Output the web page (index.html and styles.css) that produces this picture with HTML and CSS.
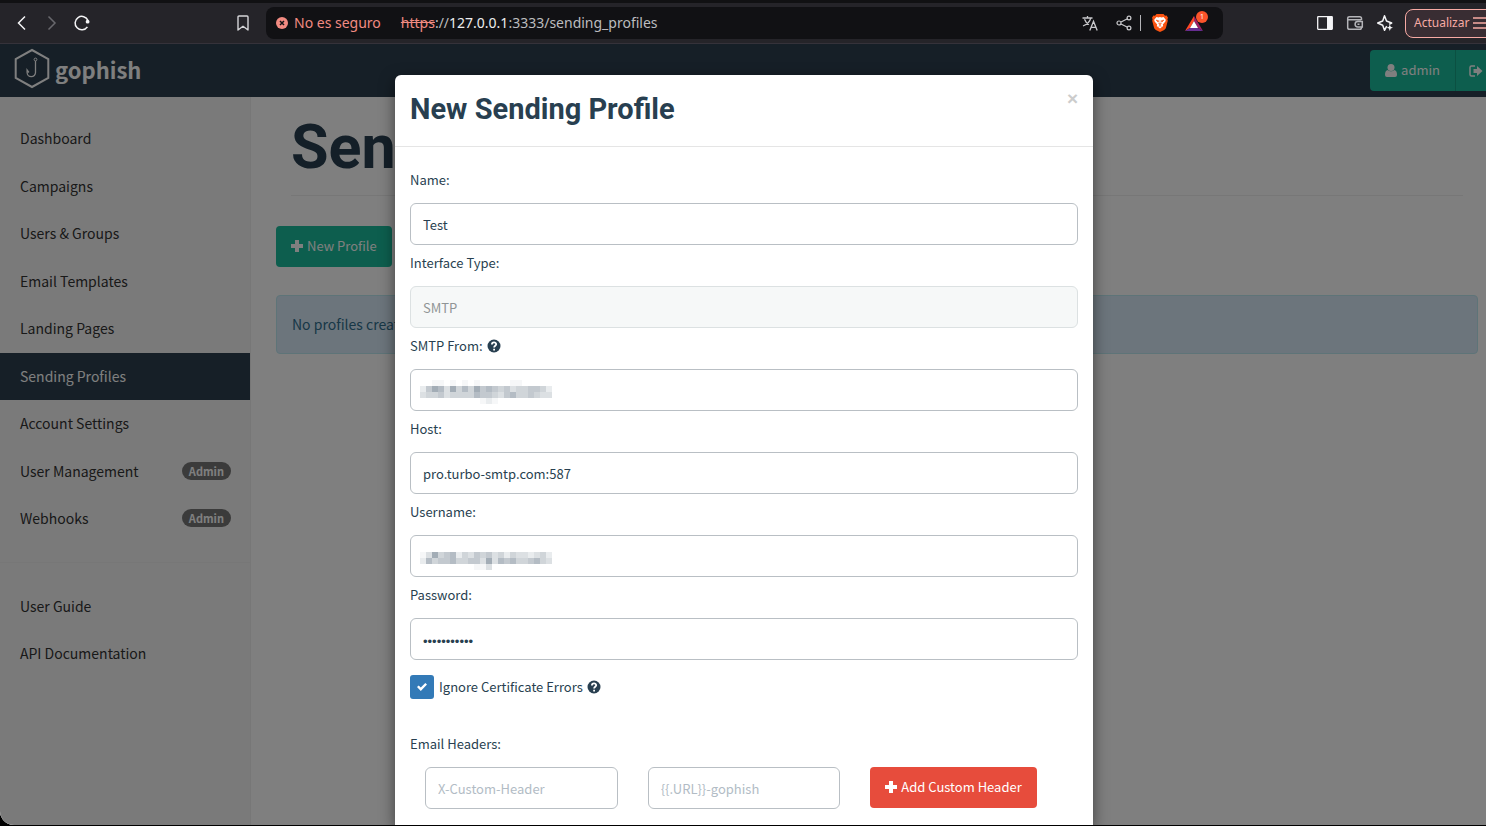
FILE: index.html
```html
<!DOCTYPE html>
<html lang="en">
<head>
    <meta charset="UTF-8">
    <meta name="viewport" content="width=device-width, initial-scale=1.0">
    <title>Sending Profiles - Gophish</title>
    <link rel="stylesheet" href="styles.css">
</head>
<body>
    <!-- Browser toolbar -->
    <div class="toolbar">
        <div class="toolbar-nav">
            <button class="icon-btn" aria-label="Back">
                <svg width="20" height="20" fill="none" stroke="#f4f4f6" stroke-width="1.5"><path d="M13 3.500 6.500 10 13 16.500"/></svg>
            </button>
            <button class="icon-btn" aria-label="Forward">
                <svg width="20" height="20" fill="none" stroke="#69686d" stroke-width="1.500"><path d="M6.500 3.500 13 10l-6.500 6.500"/></svg>
            </button>
            <button class="icon-btn" aria-label="Reload">
                <svg width="20" height="20" fill="none" stroke="#f4f4f6" stroke-width="1.500"><path d="M15.400 13.800A6.700 6.700 0 1 1 16 7.500"/><circle cx="15.600" cy="8.700" r="1.900" fill="#f4f4f6" stroke="none"/></svg>
            </button>
            <button class="icon-btn bookmark" aria-label="Bookmark">
                <svg width="20" height="20" fill="none" stroke="#d5d5d8" stroke-width="1.400" stroke-linejoin="round"><path d="M5 4q0-1 1-1h8q1 0 1 1v13l-5-3.700L5 17z"/></svg>
            </button>
        </div>

        <div class="address">
            <svg width="12" height="12"><circle cx="6" cy="6" r="6" fill="#f28b82"/><path d="m4 4 4 4m0-4L4 8" stroke="#111114" stroke-width="1.500"/></svg>
            <span class="insecure">No es seguro</span>
            <span class="url"><s>https</s>://<b>127.0.0.1</b>:3333/sending_profiles</span>
            <button class="icon-btn address-first" aria-label="Translate">
                <svg width="16" height="18" fill="none" stroke="#c9c9cc" stroke-width="1.300"><path d="M.500 4h10M5.500 2v2M8.700 4.200C8 7.500 5 10.500 1 12M2.500 5.200C3.500 8 5 9.500 7 10.500M7.800 16.500l3.700-9.300 3.700 9.300M9.100 13.300h4.800"/></svg>
            </button>
            <button class="icon-btn share" aria-label="Share">
                <svg width="16" height="16" fill="none" stroke="#c9c9cc" stroke-width="1.200"><path d="m5 7 6.500-3.300M5 9l6.500 3.300"/><circle cx="3" cy="8" r="2"/><circle cx="13" cy="3" r="1.900"/><circle cx="13" cy="13" r="1.900"/></svg>
            </button>
            <span class="divider"></span>
            <button class="icon-btn" aria-label="Brave Shields">
                <svg width="16" height="18"><path d="M4.500 0h7l1.500 1.700 1.600-.200 1.400 2.200-.600 1.600.400 1.400-2 7.500-1.600 1.800L8 18l-4.200-2-1.600-1.800-2-7.500.400-1.400L0 3.700l1.400-2.200 1.600.200z" fill="#fb5311"/><path d="m4.500 3 2 .400L8 3l1.500.400 2-.400 2.300 2.800-.400 1.600-2.600 3 .400 1.700L8 14.600 4.800 12.100l.400-1.700-2.600-3-.400-1.600z" fill="#fff"/><path d="m4 6 2.700.700-.500 1.500zM12 6l-2.700.700.500 1.500zM8 6.500v3.500M6.300 9.500 8 10.700l1.700-1.200M6.500 12.300 8 11.400l1.500.900" fill="#fb5311" stroke="#fb5311" stroke-width=".500"/></svg>
            </button>
            <button class="icon-btn rewards" aria-label="Brave Rewards">
                <svg width="18" height="17"><path d="M9 1 0 16l5-3L9 6z" fill="#ff4724"/><path d="m9 1 9 15-5-3-4-7z" fill="#9e1f63"/><path d="M0 16h18l-5-3H5z" fill="#662d91"/><path d="m9 6 4 7H5z" fill="#fff"/></svg>
                <span class="rewards-count">1</span>
            </button>
        </div>

        <div class="toolbar-end">
            <button class="icon-btn" aria-label="Sidebar">
                <svg width="20" height="20"><rect x="2.700" y="3.700" width="14.600" height="12.600" rx=".500" fill="none" stroke="#f4f4f6" stroke-width="1.300"/><path d="M12 4h5v12h-5z" fill="#f4f4f6"/></svg>
            </button>
            <button class="icon-btn" aria-label="Wallet">
                <svg width="20" height="20" fill="none" stroke="#b4b4b8" stroke-width="1.500"><path d="M16.500 7V5.500q0-1.800-1.800-1.800H4.500q-1.800 0-1.800 1.700v9q0 1.900 1.800 1.900h10.200q1.800 0 1.800-1.800V14"/><path d="M2.800 6.800h13.500M17.300 8.500h-4.500a2.700 2.700 0 0 0 0 5.400h4.500zM12.500 11.200h2"/></svg>
            </button>
            <button class="icon-btn" aria-label="Leo AI">
                <svg width="20" height="20" fill="none" stroke="#f4f4f6" stroke-width="1.500" stroke-linejoin="round"><path d="M11.700 13.200 9.500 17.300 7.700 12.300 2.700 10l5-2 1.800-5.300L11.500 8l5.200 2-2.500 1.200"/><path d="m14.800 11.500.900 2.300 2.300.900-2.300.900-.900 2.400-.900-2.400-2.300-.900 2.300-.900z" fill="#f4f4f6" stroke="none"/></svg>
            </button>
            <button class="update-btn">Actualizar
                <svg width="18" height="14" stroke="#f7aaa4" stroke-width="1.300"><path d="M0 2h18M0 7h18M0 12h18"/></svg>
            </button>
        </div>
    </div>

    <div class="page">
        <header class="navbar">
            <a class="brand" href="#">
                <svg width="36" height="41" fill="none" stroke="#fff"><path d="M18 2 34.300 11v19L18 39 1.700 30V11z" stroke-width="2"/><circle cx="21.500" cy="11.500" r="1.400"/><path d="M21.500 13v11.500a4.200 4.200 0 0 1-8.400 0V22l1.800 2.500" stroke-width="1.300"/></svg>
                <span>gophish</span>
            </a>
            <div class="btn-group">
                <button class="btn btn-primary">
                    <svg width="12" height="13" fill="#fff"><circle cx="6" cy="3.500" r="3.500"/><path d="M2.500 6C.500 6.500 0 8.500 0 11q0 2 2 2h8q2 0 2-2c0-2.500-.500-4.500-2.500-5-2 1.800-5 1.800-7 0z"/></svg>
                    admin
                </button>
                <button class="btn btn-primary" aria-label="Logout">
                    <svg width="14" height="12"><path d="M6 1H2.500Q1 1 1 2.500v7Q1 11 2.500 11H6" fill="none" stroke="#fff" stroke-width="1.500"/><path d="M4.500 4H8V1l5.500 5L8 11V8H4.500z" fill="#fff"/></svg>
                </button>
            </div>
        </header>

        <div class="layout">
            <nav class="sidebar">
                <ul class="nav nav-main">
                    <li><a href="#">Dashboard</a></li>
                    <li><a href="#">Campaigns</a></li>
                    <li><a href="#">Users &amp; Groups</a></li>
                    <li><a href="#">Email Templates</a></li>
                    <li><a href="#">Landing Pages</a></li>
                    <li><a class="active" href="#">Sending Profiles</a></li>
                    <li><a href="#">Account Settings</a></li>
                    <li><a href="#">User Management <span class="badge">Admin</span></a></li>
                    <li><a href="#">Webhooks <span class="badge">Admin</span></a></li>
                </ul>
                <hr>
                <ul class="nav">
                    <li><a href="#">User Guide</a></li>
                    <li><a href="#">API Documentation</a></li>
                </ul>
            </nav>

            <main class="main">
                <h1 class="page-header">Sending Profiles</h1>
                <button class="btn btn-primary">
                    <svg width="12" height="12" fill="#fff"><path d="M4 0h4v4h4v4H8v4H4V8H0V4h4z"/></svg>
                    New Profile
                </button>
                <div class="alert">No profiles created yet. Let's create one!</div>
            </main>
        </div>

        <!-- New profile modal -->
        <div class="modal">
            <form class="modal-dialog">
                <div class="modal-header">
                    <h4>New Sending Profile</h4>
                    <button type="button" class="close" aria-label="Close">×</button>
                </div>
                <div class="modal-body">
                    <label for="name">Name:</label>
                    <input class="form-control" type="text" id="name" value="Test">

                    <label for="interface_type">Interface Type:</label>
                    <input class="form-control" type="text" id="interface_type" value="SMTP" disabled>

                    <label for="from">SMTP From:
                        <svg width="14" height="14"><circle cx="7" cy="7" r="6.500" fill="#283f50"/><path d="M4.900 5.500C4.900 2.700 9.200 2.900 9.200 5.300 9.200 6.700 7.100 6.900 7.100 8.600M7.100 9.700v1.800" fill="none" stroke="#fff" stroke-width="1.800"/></svg>
                    </label>
                    <div class="masked">
                        <input class="form-control" type="text" id="from">
                        <svg class="mosaic" id="fromMask" width="132" height="26"></svg>
                    </div>

                    <label for="host">Host:</label>
                    <input class="form-control" type="text" id="host" value="pro.turbo-smtp.com:587">

                    <label for="username">Username:</label>
                    <div class="masked">
                        <input class="form-control" type="text" id="username">
                        <svg class="mosaic" id="usernameMask" width="132" height="26"></svg>
                    </div>

                    <label for="password">Password:</label>
                    <input class="form-control" type="password" id="password" value="12345678901">

                    <div class="checkbox">
                        <input type="checkbox" id="ignore_cert_errors" checked>
                        <label for="ignore_cert_errors">Ignore Certificate Errors
                            <svg width="14" height="14"><circle cx="7" cy="7" r="6.500" fill="#283f50"/><path d="M4.900 5.500C4.900 2.700 9.200 2.900 9.200 5.300 9.200 6.700 7.100 6.900 7.100 8.600M7.100 9.700v1.800" fill="none" stroke="#fff" stroke-width="1.800"/></svg>
                        </label>
                    </div>

                    <label for="headerKey">Email Headers:</label>
                    <div class="header-row">
                        <input class="form-control" type="text" id="headerKey" placeholder="X-Custom-Header">
                        <input class="form-control" type="text" id="headerValue" aria-label="Header value" placeholder="{{.URL}}-gophish">
                        <button type="button" class="btn btn-danger">
                            <svg width="12" height="12" fill="#fff"><path d="M4 0h4v4h4v4H8v4H4V8H0V4h4z"/></svg>
                            Add Custom Header
                        </button>
                    </div>
                </div>
            </form>
        </div>
    </div>

    <script src="script.js"></script>
</body>
</html>
```

FILE: styles.css
```css
* {
    box-sizing: border-box;
}

body {
    display: flex;
    flex-direction: column;
    height: 100vh;
    margin: 0;
    overflow: hidden;
    background: #000;
    color: #283f50;
    font-family: "Noto Sans CJK SC", sans-serif;
    font-size: 13px;
    line-height: 20px;
}

button,
input {
    font: inherit;
}

svg {
    flex: none;
    display: block;
}

/* Browser toolbar */
.toolbar {
    display: flex;
    align-items: center;
    flex: none;
    height: 44px;
    border-top: 3px solid #111113;
    border-bottom: 1px solid #35323a;
    background: #252429;
    font-family: "Noto Sans", sans-serif;
}

.toolbar-nav {
    display: flex;
    gap: 10px;
    width: 266px;
    padding: 0 13px 0 12px;
}

.icon-btn {
    position: relative;
    flex: none;
    padding: 0;
    border: 0;
    background: none;
}

.bookmark {
    margin-left: auto;
}

.address {
    display: flex;
    align-items: center;
    flex: 1;
    height: 32px;
    padding: 0 20px 0 10px;
    border-radius: 8px;
    background: #111114;
    font-size: 14px;
}

.insecure {
    margin: 0 20px 0 6px;
    color: #f28b82;
}

.url {
    color: #bcbcbf;
}

.url s {
    color: #f28b82;
}

.url b {
    color: #ececee;
    font-weight: normal;
}

.address-first {
    margin-left: auto;
}

.share {
    margin-left: 18px;
}

.divider {
    width: 1px;
    height: 16px;
    margin: 0 11px 0 8px;
    background: #b4b4b8;
}

.rewards {
    margin-left: 17px;
}

.rewards-count {
    position: absolute;
    top: -4px;
    right: -5px;
    width: 12px;
    height: 12px;
    border-radius: 6px;
    background: #fb542b;
    color: #fff;
    font-size: 7px;
    line-height: 12px;
    text-align: center;
}

.toolbar-end {
    display: flex;
    align-items: center;
    gap: 10px;
    margin: 0 -20px 0 92px;
}

.update-btn {
    display: flex;
    align-items: center;
    gap: 4px;
    width: 101px;
    height: 29px;
    padding: 0 8px;
    border: 1px solid #f7aaa4;
    border-radius: 8px;
    background: #392d33;
    color: #f7aaa4;
    font-size: 12px;
}

/* Page */
.page {
    position: relative;
    display: flex;
    flex-direction: column;
    flex: 1;
    min-height: 0;
    margin-bottom: 1px;
    overflow: hidden;
    border-radius: 0 0 0 14px;
    background: #fff;
}

.navbar {
    display: flex;
    align-items: center;
    justify-content: space-between;
    flex: none;
    height: 53px;
    padding-left: 14px;
    background: #2c3e4e;
}

.brand {
    display: flex;
    align-items: center;
    gap: 5px;
    padding-bottom: 4px;
    color: #fff;
    font-size: 22px;
    font-weight: bold;
    text-decoration: none;
}

.btn-group {
    display: flex;
    margin-right: -10px;
}

.btn-group .btn:first-child {
    border-right: 1px solid #16a085;
    border-radius: 4px 0 0 4px;
}

.btn-group .btn:last-child {
    padding: 0 13px;
    border-radius: 0 4px 4px 0;
}

.btn {
    display: inline-flex;
    align-items: center;
    gap: 4px;
    height: 41px;
    padding: 0 15px 1px;
    border: 0;
    border-radius: 4px;
    color: #fff;
    font-size: 13px;
    white-space: nowrap;
}

.btn-primary {
    background: #1abc9c;
}

.btn-danger {
    justify-self: start;
    background: #e74c3c;
}

.layout {
    display: flex;
    flex: 1;
}

.sidebar {
    width: 251px;
    padding-top: 18px;
    border-right: 1px solid #eee;
    background: #f5f5f5;
}

.sidebar hr {
    margin: 20px 0;
    border: 0;
    border-top: 1px solid #eee;
}

.nav {
    margin: 0;
    padding: 0;
    list-style: none;
    font-size: 14px;
}

.nav-main li:nth-child(even) {
    padding-top: 1px;
}

.nav a {
    display: flex;
    align-items: center;
    justify-content: space-between;
    height: 47px;
    padding: 0 19px 1px 20px;
    color: #333;
    text-decoration: none;
}

.nav a.active {
    background: #2c3e4e;
    color: #fff;
}

.badge {
    padding: 0 7px;
    border-radius: 10px;
    background: #777;
    color: #fff;
    font-size: 11px;
    font-weight: bold;
    line-height: 18px;
}

.main {
    flex: 1;
    padding: 17px 8px 0 25px;
}

.page-header {
    margin: 0 15px 30px;
    padding-bottom: 15px;
    border-bottom: 1px solid #eee;
    color: #283f50;
    font-family: Roboto, sans-serif;
    font-size: 61px;
    line-height: 66px;
}

.alert {
    margin-top: 28px;
    padding: 18px 15px 19px;
    border: 1px solid #bce8f1;
    border-radius: 4px;
    background: #d8eaf8;
    color: #31708f;
    font-size: 14px;
}

/* Modal */
.modal {
    position: absolute;
    inset: 0;
    display: flex;
    justify-content: center;
    padding: 31px 0 0 2px;
    background: rgba(0, 0, 0, 0.5);
}

.modal-dialog {
    width: 698px;
    border-radius: 6px 6px 0 0;
    background: #fff;
    box-shadow: 0 5px 15px rgba(0, 0, 0, 0.5);
}

.modal-header {
    display: flex;
    align-items: flex-start;
    justify-content: space-between;
    padding: 15px 15px 17px;
    border-bottom: 1px solid #e5e5e5;
}

.modal-header h4 {
    margin: 0;
    font-family: Roboto, sans-serif;
    font-size: 29px;
    line-height: 39px;
}

.close {
    padding: 0;
    border: 0;
    background: none;
    color: #ccc;
    font-family: "Liberation Sans", sans-serif;
    font-size: 19px;
    font-weight: bold;
    line-height: 18px;
}

.modal-body {
    padding: 15px;
}

.modal-body label {
    display: flex;
    align-items: center;
    gap: 4px;
    padding: 8px 0 13px;
}

.form-control {
    display: block;
    width: 100%;
    min-width: 0;
    height: 42px;
    padding: 0 12px;
    border: 1px solid #b9bfc4;
    border-radius: 6px;
    background: #fff;
    color: #283f50;
}

.form-control:disabled {
    border-color: #dce1e2;
    background: #f6f8f8;
    color: #909596;
}

.form-control::placeholder {
    color: #b2bcc5;
}

.form-control[type="password"] {
    padding-top: 4px;
    font-family: "Liberation Sans", sans-serif;
}

.masked {
    position: relative;
}

.mosaic {
    position: absolute;
    top: 11px;
    left: 10px;
}

.checkbox {
    display: flex;
    align-items: center;
    gap: 5px;
    margin: 15px 0 27px;
}

.modal-body .checkbox label {
    padding: 0;
}

.checkbox input {
    display: grid;
    place-items: center;
    width: 24px;
    height: 24px;
    margin: 0;
    border-radius: 3px;
    background: #337ab7;
    appearance: none;
}

.checkbox input::before {
    content: "";
    width: 10px;
    height: 8px;
    background: #fff;
    clip-path: polygon(0 50%, 17% 30%, 38% 55%, 83% 0, 100% 20%, 38% 100%);
}

.header-row {
    display: grid;
    grid-template-columns: repeat(3, 1fr);
    gap: 30px;
    padding: 0 15px;
}
```

FILE: script.js
```js
// Grey level of every 6px tile, one letter each: a is darkest, space is empty
const shades = {
    a: '#a3adb6', b: '#b4bcc4', c: '#c3c9cf', d: '#d0d5d9',
    e: '#dce0e3', f: '#e9ecee', g: '#f6f7f8'
};

function drawMosaic(id, rows) {
    let html = '';
    rows.forEach((row, y) => {
        [...row].forEach((tile, x) => {
            if (shades[tile]) {
                html += `<rect x="${x * 6}" y="${y * 6}" width="6" height="6" fill="${shades[tile]}"/>`;
            }
        });
    });
    document.getElementById(id).innerHTML = html;
}

drawMosaic('fromMask', [
    '  gg g g g     gg     ',
    'fcabeadbdacbcdceddccdf',
    'eddceddddbccdecbddcdee',
    '          gfg         '
]);

drawMosaic('usernameMask', [
    '                      ',
    'geadcbfdecdcedfdeefedf',
    'fbdccbddcceaebcbddcbde',
    '         gge          '
]);
```
